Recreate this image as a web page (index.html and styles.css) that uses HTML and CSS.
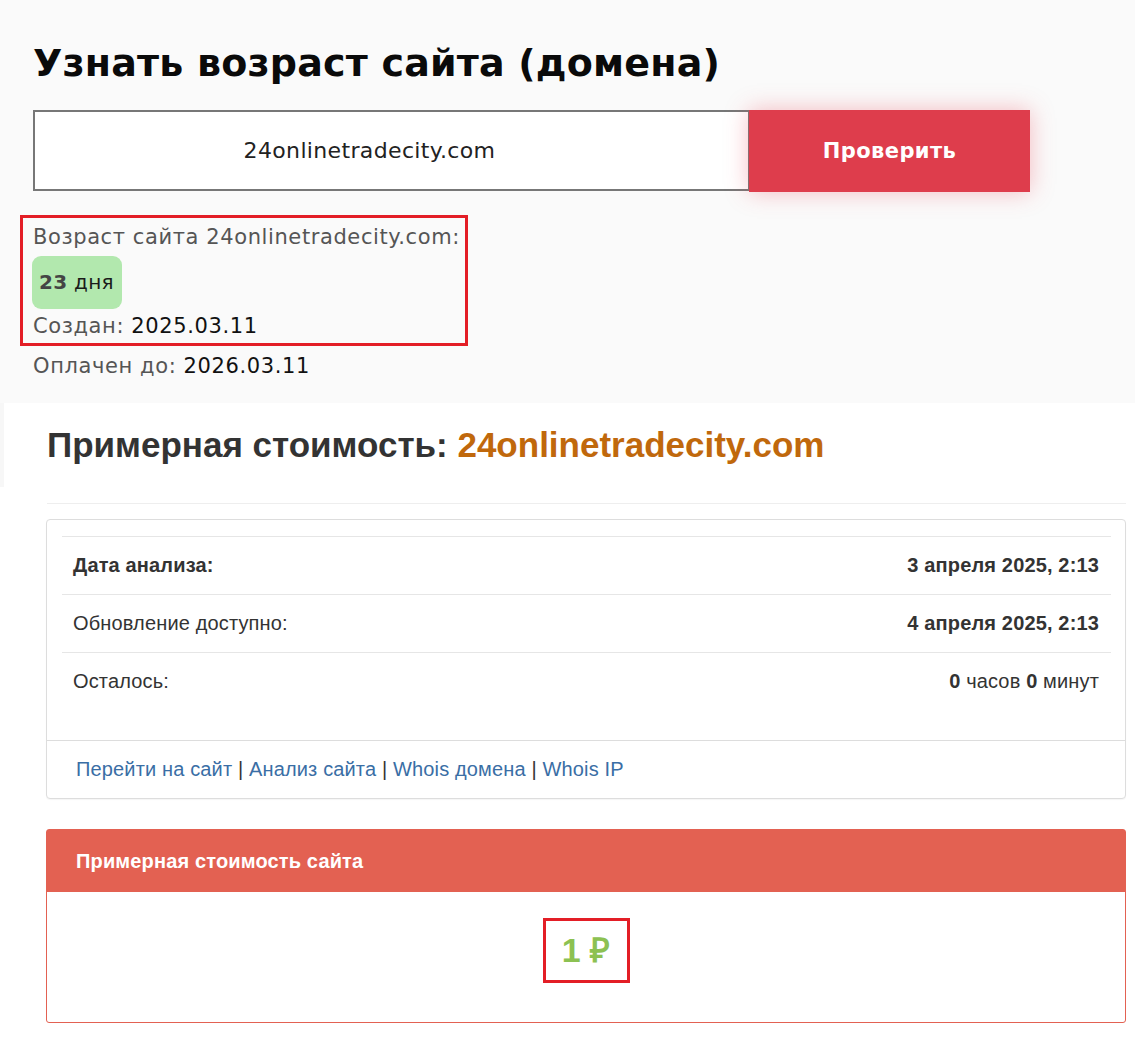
FILE: index.html
```html
<!DOCTYPE html>
<html lang="ru">
<head>
<meta charset="utf-8">
<title>Узнать возраст сайта</title>
<link rel="stylesheet" href="styles.css">
</head>
<body>
<section class="age">
  <h1 class="age-title">Узнать возраст сайта (домена)</h1>
  <form class="check-form">
    <input class="domain-input" type="text" value="24onlinetradecity.com" readonly>
    <button class="check-btn" type="button">Проверить</button>
  </form>
  <div class="age-result">
    <div class="age-line">Возраст сайта 24onlinetradecity.com:</div>
    <div class="age-badge"><b>23</b> дня</div>
    <div class="age-line">Создан: <span class="val">2025.03.11</span></div>
  </div>
  <div class="paid-line">Оплачен до: <span class="val">2026.03.11</span></div>
</section>

<section class="estimate">
  <div class="estimate-head">
    <h2 class="estimate-title">Примерная стоимость: <span class="domain">24onlinetradecity.com</span></h2>
  </div>
  <div class="estimate-body">
    <hr class="sep">
    <div class="panel">
      <div class="panel-body">
        <table class="info-table">
          <tr>
            <th>Дата анализа:</th>
            <td><b>3 апреля 2025, 2:13</b></td>
          </tr>
          <tr>
            <td class="lbl">Обновление доступно:</td>
            <td><b>4 апреля 2025, 2:13</b></td>
          </tr>
          <tr>
            <td class="lbl">Осталось:</td>
            <td><b>0</b> часов <b>0</b> минут</td>
          </tr>
        </table>
      </div>
      <div class="panel-footer">
        <a href="#">Перейти на сайт</a> | <a href="#">Анализ сайта</a> | <a href="#">Whois домена</a> | <a href="#">Whois IP</a>
      </div>
    </div>

    <div class="price-panel">
      <div class="price-head">Примерная стоимость сайта</div>
      <div class="price-body">
        <span class="price">1 ₽</span>
      </div>
    </div>
  </div>
</section>
</body>
</html>
```
FILE: styles.css
```css
html, body {
  margin: 0;
  padding: 0;
  background: #ffffff;
}

.age {
  background: #fafafa;
  padding: 40px 0 17px 33px;
  font-family: "DejaVu Sans", "Noto Sans", sans-serif;
}

.age-title {
  margin: 0;
  font-size: 38px;
  line-height: 46px;
  font-weight: 700;
  color: #0a0a0a;
  letter-spacing: 0.2px;
}

.check-form {
  display: flex;
  margin: 24px 0 0 0;
  height: 82px;
}

.domain-input {
  box-sizing: border-box;
  width: 717px;
  height: 81px;
  margin: 0;
  padding: 0 44px 0 0;
  border: 2px solid #777777;
  background: #ffffff;
  font-family: "DejaVu Sans", sans-serif;
  font-size: 22px;
  letter-spacing: 0.35px;
  color: #222222;
  text-align: center;
  outline: none;
}

.check-btn {
  box-sizing: border-box;
  width: 281px;
  height: 82px;
  margin: 0 0 0 -1px;
  border: 0;
  background: #de3d4c;
  color: #ffffff;
  font-family: "DejaVu Sans", sans-serif;
  font-size: 21px;
  font-weight: 700;
  letter-spacing: 0.4px;
  box-shadow: 0 0 22px rgba(235, 70, 85, 0.35);
}

.age-result {
  box-sizing: border-box;
  width: 448px;
  margin: 23px 0 0 -13px;
  padding: 0 0 0 10px;
  border: 3px solid #e31e26;
  font-size: 21px;
  letter-spacing: 0.6px;
  color: #555555;
}

.age-line {
  height: 38px;
  line-height: 38px;
  white-space: nowrap;
}

.age-result .age-line:last-child {
  height: 34px;
  line-height: 34px;
}

.age-badge {
  display: inline-block;
  box-sizing: border-box;
  height: 53px;
  line-height: 53px;
  margin-left: -1px;
  padding: 0 8px 0 7px;
  background: #b2e8ae;
  border-radius: 9px;
  color: #1a1a1a;
  font-size: 20px;
  letter-spacing: 0.3px;
  vertical-align: top;
}

.age-badge b {
  color: #444444;
}

.val {
  color: #111111;
}

.paid-line {
  height: 40px;
  line-height: 40px;
  font-size: 21px;
  letter-spacing: 0.6px;
  color: #555555;
}

/* ---------- estimate ---------- */

.estimate {
  font-family: "Liberation Sans", Arial, sans-serif;
  color: #333333;
  padding-bottom: 20px;
}

.estimate-head {
  border-left: 4px solid #f7f7f7;
  padding: 22px 0 22px 43px;
}

.estimate-title {
  margin: 0;
  font-size: 35px;
  line-height: 40px;
  font-weight: 700;
  color: #333333;
}

.estimate-title .domain {
  color: #c0680c;
}

.estimate-body {
  padding: 0 9px 0 46px;
}

.sep {
  margin: 16px 0 15px 1px;
  border: 0;
  border-top: 1px solid #eeeeee;
  height: 0;
}

.panel {
  border: 1px solid #dddddd;
  border-radius: 4px;
  background: #ffffff;
  box-shadow: 0 1px 1px rgba(0, 0, 0, 0.04);
}

.panel-body {
  padding: 16px 14px 30px 15px;
}

.info-table {
  width: 100%;
  border-collapse: collapse;
  font-size: 20px;
  letter-spacing: 0.15px;
}

.info-table th,
.info-table td {
  height: 57px;
  padding: 0 12px 0 11px;
  border-top: 1px solid #e6e6e6;
  vertical-align: middle;
  text-align: right;
  color: #333333;
}

.info-table th,
.info-table td.lbl {
  text-align: left;
}

.info-table th {
  font-weight: 700;
}

.panel-footer {
  border-top: 1px solid #dddddd;
  height: 57px;
  line-height: 57px;
  padding-left: 29px;
  font-size: 20px;
  letter-spacing: 0.15px;
  color: #333333;
}

.panel-footer a {
  color: #3a6ea5;
  text-decoration: none;
}

.price-panel {
  margin-top: 30px;
  border: 1px solid #e36152;
  border-radius: 3px;
  background: #ffffff;
}

.price-head {
  height: 62px;
  line-height: 62px;
  padding-left: 29px;
  background: #e36152;
  color: #ffffff;
  font-size: 20px;
  letter-spacing: 0.15px;
  font-weight: 700;
}

.price-body {
  height: 130px;
  display: flex;
  align-items: center;
  justify-content: center;
}

.price {
  box-sizing: border-box;
  display: inline-block;
  width: 87px;
  height: 65px;
  line-height: 59px;
  border: 3px solid #e31e26;
  text-align: center;
  color: #8cc152;
  font-size: 34px;
  font-weight: 700;
  margin-top: -13px;
}
```
